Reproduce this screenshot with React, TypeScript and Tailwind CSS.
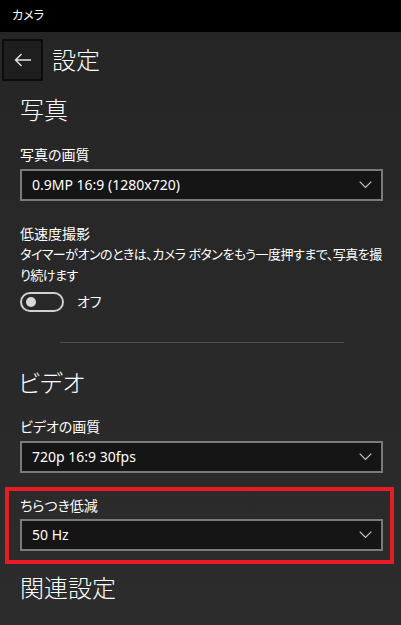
const font = "font-['Segoe_UI','Noto_Sans','Noto_Sans_CJK_JP',sans-serif] [font-feature-settings:'palt']";

function Chevron() {
  return (
    <svg width="13" height="8" viewBox="0 0 13 8" className="shrink-0">
      <path d="M0.7 0.7 L6.5 6.5 L12.3 0.7" fill="none" stroke="#c8c8c8" strokeWidth="1.2" />
    </svg>
  );
}

function Select({ value }: { value: string }) {
  return (
    <div className="flex h-8 w-[363px] items-center justify-between border-2 border-[#7a7a7a] bg-[#151515] pl-[10px] pr-[9px]">
      <span className="text-[14px] leading-5 text-white">{value}</span>
      <Chevron />
    </div>
  );
}

function Label({ children }: { children: React.ReactNode }) {
  return <div className="text-[14px] leading-5 text-white">{children}</div>;
}

function Heading({ children }: { children: React.ReactNode }) {
  return <div className="text-[24px] font-light leading-8 text-white">{children}</div>;
}

export default function App() {
  return (
    <div className={`${font} h-[625px] w-[401px] overflow-hidden bg-gradient-to-b from-[#252525] to-[#2c2c2c]`}>
      <div className="flex h-8 items-center bg-black pl-3 text-[12px] text-white">カメラ</div>

      <div className="mt-[7px] flex items-center">
        <div className="ml-[2px] flex h-[42px] w-[41px] items-center justify-center border-2 border-[#0c0c0c] bg-[#1e1e1e]">
          <svg width="18" height="14" viewBox="0 0 18 14">
            <path d="M17 7 H1.5 M7.5 1 L1.5 7 L7.5 13" fill="none" stroke="#e6e6e6" strokeWidth="1.4" />
          </svg>
        </div>
        <div className="ml-[9px] text-[24px] font-light leading-8 text-white">設定</div>
      </div>

      <div className="px-5">
        <div className="mt-[13px]">
          <Heading>写真</Heading>
        </div>

        <div className="mt-[19px]">
          <Label>写真の画質</Label>
        </div>
        <div className="mt-1">
          <Select value="0.9MP 16:9 (1280x720)" />
        </div>

        <div className="mt-[23px]">
          <Label>低速度撮影</Label>
        </div>
        <div className="whitespace-nowrap text-[13px] leading-[21px] tracking-[-0.5px] text-white">
          タイマーがオンのときは、カメラ ボタンをもう一度押すまで、写真を撮
          <br />
          り続けます
        </div>

        <div className="mt-[6px] flex items-center">
          <div className="flex h-5 w-11 items-center rounded-full border-2 border-[#d0d0d0] pl-[4px]">
            <div className="h-[10px] w-[10px] rounded-full bg-[#d8d8d8]" />
          </div>
          <span className="ml-[13px] text-[14px] leading-5 text-white">オフ</span>
        </div>

        <div className="ml-10 mt-[30px] h-px w-[284px] bg-[#4d4d4d]" />

        <div className="-ml-[2px] mt-6">
          <Heading>ビデオ</Heading>
        </div>

        <div className="mt-[18px]">
          <Label>ビデオの画質</Label>
        </div>
        <div className="mt-1">
          <Select value="720p 16:9 30fps" />
        </div>

        <div className="-mx-[15px] mt-[14px] w-[389px] border-4 border-[#e81c24] pb-[9px] pl-[11px] pt-[5px]">
          <Label>ちらつき低減</Label>
          <div className="mt-[3px]">
            <Select value="50 Hz" />
          </div>
        </div>

        <div className="mt-[8px]">
          <Heading>関連設定</Heading>
        </div>
      </div>
    </div>
  );
}
